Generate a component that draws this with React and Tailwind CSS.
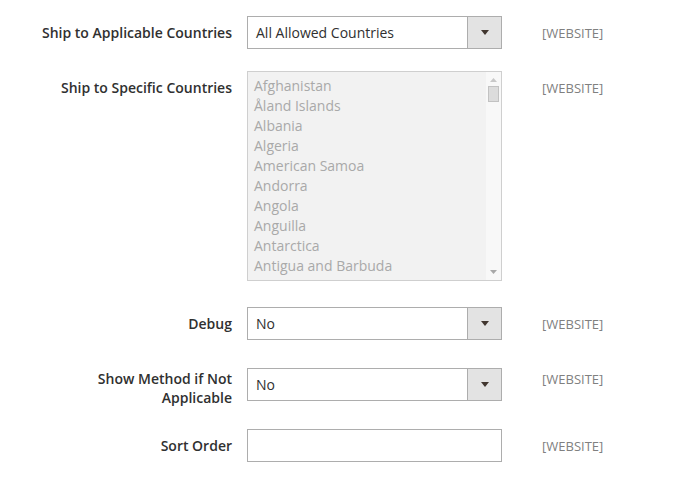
import React from 'react';

const countries = [
  'Afghanistan',
  'Åland Islands',
  'Albania',
  'Algeria',
  'American Samoa',
  'Andorra',
  'Angola',
  'Anguilla',
  'Antarctica',
  'Antigua and Barbuda',
];

const Label = ({ children, className = 'pt-[7px]' }) => (
  <div className={`w-[202px] shrink-0 text-right text-[14px] leading-[19px] font-semibold text-[#303030] ${className}`}>
    {children}
  </div>
);

const Scope = ({ className = 'pt-[8px]' }) => (
  <div className={`ml-[40px] text-[13px] leading-[19px] text-[#808080] ${className}`}>[WEBSITE]</div>
);

const Select = ({ value }) => (
  <div className="flex h-[33px] w-[255px] shrink-0 border border-[#adadad] bg-white">
    <div className="flex flex-1 items-center pl-[8px] text-[14px] text-[#303030]">{value}</div>
    <div className="flex w-[34px] items-center justify-center border-l border-[#adadad] bg-[#e3e3e3]">
      <svg width="8" height="5" viewBox="0 0 8 5">
        <path d="M0 0h8L4 5z" fill="#41362f" />
      </svg>
    </div>
  </div>
);

export default function App() {
  return (
    <div className="min-h-[481px] bg-white pl-[30px]" style={{ fontFamily: '"Open Sans", "Liberation Sans", sans-serif' }}>
      <div className="flex flex-col pt-[16px]">
        {/* Ship to Applicable Countries */}
        <div className="flex items-start">
          <Label>Ship to Applicable Countries</Label>
          <div className="ml-[15px]">
            <Select value="All Allowed Countries" />
          </div>
          <Scope />
        </div>

        {/* Ship to Specific Countries */}
        <div className="mt-[22px] flex items-start">
          <Label>Ship to Specific Countries</Label>
          <div className="ml-[15px] flex h-[210px] w-[255px] shrink-0 border border-[#cfcfcf] bg-[#f2f2f2]">
            <div className="flex-1 overflow-hidden pl-[6px] pt-[4px]">
              {countries.map(c => (
                <div key={c} className="text-[14px] leading-[20px] text-[#a9a9a9] whitespace-nowrap">{c}</div>
              ))}
            </div>
            <div className="flex w-[15px] flex-col items-center bg-[#f8f8f8]">
              <svg className="mt-[6px]" width="7" height="4" viewBox="0 0 7 4">
                <path d="M0 4h7L3.5 0z" fill="#c8c8c8" />
              </svg>
              <div className="mt-[4px] h-[16px] w-[11px] border border-[#c2c2c2] bg-[#dcdcdc]" />
              <div className="flex-1" />
              <svg className="mb-[6px]" width="7" height="4" viewBox="0 0 7 4">
                <path d="M0 0h7L3.5 4z" fill="#a8a8a8" />
              </svg>
            </div>
          </div>
          <Scope />
        </div>

        {/* Debug */}
        <div className="mt-[26px] flex items-start">
          <Label>Debug</Label>
          <div className="ml-[15px]">
            <Select value="No" />
          </div>
          <Scope />
        </div>

        {/* Show Method if Not Applicable */}
        <div className="mt-[28px] flex items-start">
          <Label className="pt-[1px]">Show Method if Not Applicable</Label>
          <div className="ml-[15px]">
            <Select value="No" />
          </div>
          <Scope className="pt-[2px]" />
        </div>

        {/* Sort Order */}
        <div className="mt-[22px] flex items-start">
          <Label>Sort Order</Label>
          <div className="ml-[15px] h-[33px] w-[255px] shrink-0 border border-[#adadad] bg-white" />
          <Scope />
        </div>
      </div>
    </div>
  );
}
